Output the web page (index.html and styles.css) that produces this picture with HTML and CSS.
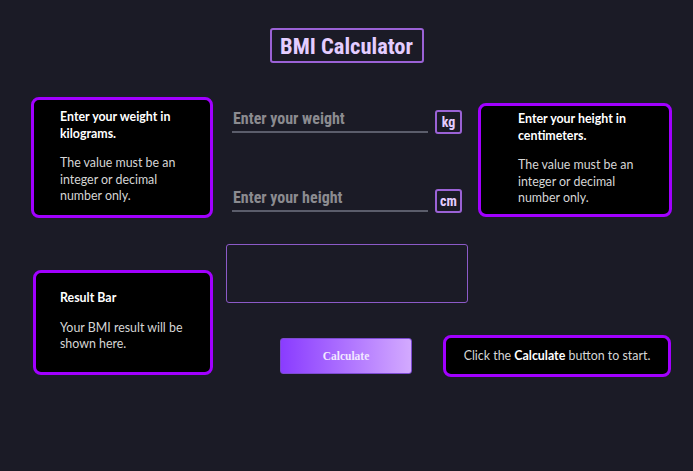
FILE: index.html
```html
<!DOCTYPE html>
<html>
<head>
<meta charset="utf-8">
<link rel="stylesheet" href="styles.css">
</head>
<body>
<div class="page">
  <header class="head">
    <h1 class="title">BMI Calculator</h1>
  </header>

  <section class="top">
    <div class="card card-weight">
      <p class="strong">Enter your weight in kilograms.</p>
      <p>The value must be an integer or decimal number only.</p>
    </div>

    <div class="inputs">
      <div class="field">
        <div class="line">Enter your weight</div>
        <div class="unit">kg</div>
      </div>
      <div class="field">
        <div class="line">Enter your height</div>
        <div class="unit">cm</div>
      </div>
    </div>

    <div class="card card-height">
      <p class="strong">Enter your height in centimeters.</p>
      <p>The value must be an integer or decimal number only.</p>
    </div>
  </section>

  <section class="bottom">
    <div class="card card-result">
      <p class="strong">Result Bar</p>
      <p>Your BMI result will be shown here.</p>
    </div>
    <div class="right">
      <div class="result-box"></div>
      <div class="actions">
        <button class="calc">Calculate</button>
        <div class="card card-hint"><span>Click the <b>Calculate</b> button to start.</span></div>
      </div>
    </div>
  </section>
</div>
</body>
</html>
```

FILE: styles.css
```css
html, body {
  margin: 0;
  padding: 0;
  background: #1b1b26;
}
body {
  width: 693px;
  height: 471px;
  overflow: hidden;
  font-family: Lato, "Open Sans", sans-serif;
}
.page {
  padding-top: 28px;
}
.head {
  display: flex;
  justify-content: center;
}
.title {
  margin: 0;
  box-sizing: border-box;
  width: 154px;
  height: 35px;
  border: 2px solid #9b62d6;
  border-radius: 3px;
  display: flex;
  align-items: center;
  justify-content: center;
  white-space: nowrap;
  font-family: Roboto, "DejaVu Sans", sans-serif;
  font-stretch: 75%;
  font-weight: 700;
  font-size: 22.5px;
  color: #e4cdff;
}

.card {
  box-sizing: border-box;
  background: #000;
  border: 3px solid #a100ff;
  border-radius: 8px;
  color: #d6d6d6;
  font-size: 12.4px;
  line-height: 16.5px;
}
.card p {
  margin: 0;
}
.card p + p {
  margin-top: 13px;
}
.card .strong {
  color: #fff;
  font-weight: 700;
}

.top {
  margin-top: 34px;
  display: grid;
  grid-template-columns: 182px 241px 194px;
  column-gap: 12px;
  padding-left: 31px;
  align-items: start;
}
.card-weight {
  height: 121px;
  padding: 9px 26px 0 26px;
}
.card-height {
  margin-top: 6px;
  height: 114px;
  padding: 5px 20px 0 37px;
}

.inputs {
  padding: 13px 0 0 7px;
  display: flex;
  flex-direction: column;
  gap: 55px;
}
.field {
  display: flex;
  align-items: flex-end;
  gap: 7px;
}
.line {
  width: 196px;
  height: 23px;
  box-sizing: border-box;
  border-bottom: 2px solid #5b5d6b;
  padding-left: 1px;
  font-family: Roboto, "DejaVu Sans", sans-serif;
  font-stretch: 75%;
  font-weight: 700;
  font-size: 16px;
  line-height: 18px;
  color: #8b8b90;
  margin-bottom: 1px;
  white-space: nowrap;
}
.unit {
  box-sizing: border-box;
  width: 27px;
  height: 24px;
  border: 2px solid #9b62d6;
  border-radius: 3px;
  display: flex;
  align-items: center;
  justify-content: center;
  font-family: Roboto, "DejaVu Sans", sans-serif;
  font-stretch: 75%;
  font-weight: 700;
  font-size: 14px;
  color: #e4cdff;
}

.bottom {
  margin-top: 26px;
  display: flex;
  align-items: flex-start;
  padding-left: 33px;
}
.card-result {
  margin-top: 26px;
  width: 180px;
  height: 105px;
  padding: 17px 18px 0 24px;
}
.right {
  margin-left: 13px;
  display: flex;
  flex-direction: column;
}
.result-box {
  box-sizing: border-box;
  width: 242px;
  height: 59px;
  border: 1.5px solid #8c5ac8;
  border-radius: 3px;
}
.actions {
  margin-top: 32px;
  display: flex;
  align-items: center;
}
.calc {
  margin-left: 54px;
  width: 132px;
  height: 36px;
  border: 1px solid #7d4bd0;
  border-radius: 3px;
  background: linear-gradient(90deg, #8a3cff 0%, #b57dff 60%, #d3aaff 100%);
  color: #f2e8ff;
  font-family: "Liberation Serif", serif;
  font-weight: 700;
  font-size: 11.5px;
  padding: 0;
}
.card-hint {
  margin-left: 31px;
  width: 228px;
  height: 42px;
  display: flex;
  align-items: center;
  justify-content: center;
}
.card-hint b {
  color: #fff;
}
```
